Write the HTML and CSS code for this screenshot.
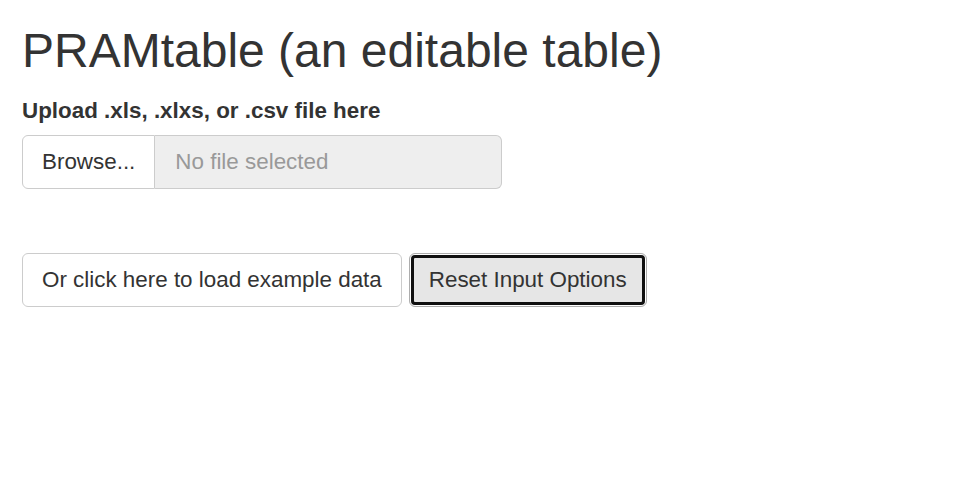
FILE: index.html
```html
<!DOCTYPE html>
<html>
<head>
<meta charset="utf-8">
<link rel="stylesheet" href="styles.css">
</head>
<body>
<div class="container">
  <h2 class="title">PRAMtable (an editable table)</h2>
  <div class="form-group">
    <label class="label">Upload .xls, .xlxs, or .csv file here</label>
    <div class="input-group">
      <span class="btn browse">Browse...</span>
      <span class="file-field">No file selected</span>
    </div>
  </div>
  <div class="actions">
    <button class="btn">Or click here to load example data</button>
    <button class="btn focused">Reset Input Options</button>
  </div>
</div>
</body>
</html>
```

FILE: styles.css
```css
html, body {
  margin: 0;
  padding: 0;
  background: #fff;
}
body {
  font-family: "Liberation Sans", Arial, sans-serif;
  font-size: 22.4px;
  line-height: 1.42857;
  color: #333;
}
.container {
  padding: 0 22px;
}
.title {
  font-size: 48px;
  font-weight: 500;
  line-height: 1.1;
  margin: 25px 0 17px;
}
.label {
  display: inline-block;
  font-weight: bold;
  margin-bottom: 8px;
}
.input-group {
  display: flex;
  width: 480px;
  height: 54px;
}
.btn {
  box-sizing: border-box;
  display: inline-flex;
  align-items: center;
  height: 54px;
  padding: 0 19px;
  font-family: inherit;
  font-size: 22.4px;
  color: #333;
  background: #fff;
  border: 1px solid #ccc;
  border-radius: 6px;
  cursor: pointer;
}
.browse {
  border-radius: 6px 0 0 6px;
}
.file-field {
  box-sizing: border-box;
  flex: 1;
  display: flex;
  align-items: center;
  padding: 0 20px;
  background: #eee;
  color: #999;
  border: 1px solid #ccc;
  border-left: none;
  border-radius: 0 6px 6px 0;
}
.actions {
  display: flex;
  gap: 7px;
  margin-top: 64px;
}
.focused {
  background: #e6e6e6;
  border-color: #adadad;
  box-shadow: inset 0 0 0 1px #fff;
  outline: 3px solid #101010;
  outline-offset: -5px;
}
```
